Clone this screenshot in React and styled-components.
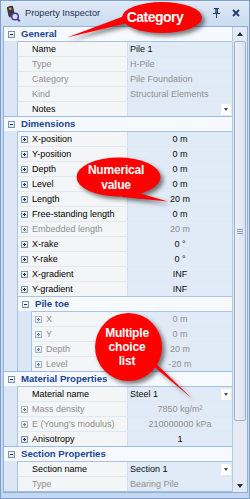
import React from 'react';
import styled, { createGlobalStyle } from 'styled-components';

const GlobalStyle = createGlobalStyle`
  html, body {
    margin: 0;
    padding: 0;
    background: #ffffff;
  }
  body {
    font-family: "Liberation Sans", Arial, sans-serif;
  }
`;

const sections = [
  {
    title: 'General',
    rows: [
      { name: 'Name', value: 'Pile 1', text: true },
      { name: 'Type', value: 'H-Pile', text: true, off: true },
      { name: 'Category', value: 'Pile Foundation', text: true, off: true },
      { name: 'Kind', value: 'Structural Elements', text: true, off: true },
      { name: 'Notes', value: '', drop: true },
    ],
  },
  {
    title: 'Dimensions',
    rows: [
      { name: 'X-position', value: '0 m', plus: true },
      { name: 'Y-position', value: '0 m', plus: true },
      { name: 'Depth', value: '0 m', plus: true },
      { name: 'Level', value: '0 m', plus: true },
      { name: 'Length', value: '20 m', plus: true },
      { name: 'Free-standing length', value: '0 m', plus: true },
      { name: 'Embedded length', value: '20 m', plus: true, off: true },
      { name: 'X-rake', value: '0 °', plus: true },
      { name: 'Y-rake', value: '0 °', plus: true },
      { name: 'X-gradient', value: 'INF', plus: true },
      { name: 'Y-gradient', value: 'INF', plus: true },
    ],
    sub: {
      title: 'Pile toe',
      rows: [
        { name: 'X', value: '0 m', plus: true, off: true },
        { name: 'Y', value: '0 m', plus: true, off: true },
        { name: 'Depth', value: '20 m', plus: true, off: true },
        { name: 'Level', value: '-20 m', plus: true, off: true },
      ],
    },
  },
  {
    title: 'Material Properties',
    rows: [
      { name: 'Material name', value: 'Steel 1', drop: true },
      { name: 'Mass density', value: '7850 kg/m²', plus: true, off: true },
      { name: "E (Young's modulus)", value: '210000000 kPa', plus: true, off: true },
      { name: 'Anisotropy', value: '1', plus: true },
    ],
  },
  {
    title: 'Section Properties',
    rows: [
      { name: 'Section name', value: 'Section 1', drop: true },
      { name: 'Type', value: 'Bearing Pile', text: true, off: true },
    ],
  },
];

const callouts = [
  {
    lines: ['Category'],
    ellipse: { cx: 162, cy: 17.5, rx: 40, ry: 15.5 },
    tail: '135,12 136,21 67,37.5',
    x: 122, y: 9, w: 66, size: 14, lh: 16,
  },
  {
    lines: ['Numerical', 'value'],
    ellipse: { cx: 118.5, cy: 177, rx: 42, ry: 19.5 },
    tail: '125,189 122,197 168,201.5',
    x: 82, y: 163, w: 68, size: 12, lh: 15,
  },
  {
    lines: ['Multiple', 'choice', 'list'],
    ellipse: { cx: 128.5, cy: 347, rx: 33.5, ry: 34 },
    tail: '148,356 146,360 192,398.5',
    x: 97, y: 326, w: 60, size: 12, lh: 14,
  },
];

const Page = styled.div`
  position: relative;
  width: 250px;
  height: 499px;
  overflow: hidden;
`;

const Window = styled.div`
  box-sizing: border-box;
  width: 250px;
  height: 499px;
  border: 1px solid #7f9fc9;
  background: linear-gradient(#dfe9f6, #c9dbf0 26px, #c4d7ee);
  display: flex;
  flex-direction: column;
  padding: 0 1px 5px 2px;
  font-family: "Liberation Sans", Arial, sans-serif;
`;

const TitleBar = styled.div`
  height: 25px;
  display: flex;
  align-items: center;
  padding: 0 8px 0 2px;
  gap: 4px;
  flex-shrink: 0;
`;

const TitleText = styled.span`
  font-size: 9.2px;
  color: #1d2f4f;
  margin-top: -1px;
`;

const TitleButtons = styled.div`
  margin-left: auto;
  display: flex;
  align-items: center;
  gap: 11px;
  margin-top: -1px;
`;

const Panel = styled.div`
  flex: 1;
  display: flex;
  border: 1px solid #8fb0da;
  background: #f6f8fb;
  min-height: 0;
`;

const Grid = styled.div`
  width: 228px;
  display: flex;
  flex-direction: column;
`;

const Section = styled.div`
  border-bottom: 1px solid #9dbce5;
`;

const CategoryHeader = styled.div`
  height: 14px;
  display: flex;
  align-items: center;
  background: #f6f9fd;
  border-top: ${(p) => (p.$sub ? '1px solid #a6c2e7' : 'none')};
`;

const ExpandCell = styled.div`
  width: 14px;
  height: 14px;
  display: flex;
  align-items: center;
  justify-content: center;
  flex-shrink: 0;
`;

const ExpandBox = styled.span`
  position: relative;
  box-sizing: border-box;
  width: 7px;
  height: 7px;
  flex-shrink: 0;
  border: 1px solid ${(p) => (p.$off ? '#a3b3c8' : '#7a92b4')};
  background: linear-gradient(#ffffff, #dbe3ee);
  &::before {
    content: '';
    position: absolute;
    left: 1px;
    top: 2px;
    width: 3px;
    height: 1px;
    background: ${(p) => (p.$off ? '#6f7d90' : '#1d2c45')};
  }
  &::after {
    content: '';
    display: ${(p) => (p.$plus ? 'block' : 'none')};
    position: absolute;
    left: 2px;
    top: 1px;
    width: 1px;
    height: 3px;
    background: ${(p) => (p.$off ? '#6f7d90' : '#1d2c45')};
  }
`;

const CategoryTitle = styled.span`
  padding-left: 3px;
  font-size: 9.6px;
  font-weight: bold;
  color: #1b4596;
  line-height: 14px;
`;

const Body = styled.div`
  display: flex;
`;

const Margin = styled.div`
  width: 13px;
  flex-shrink: 0;
  background: #dce7f5;
  border-right: 1px solid #a9c3e5;
`;

const Rows = styled.div`
  flex: 1;
  display: flex;
  flex-direction: column;
`;

const Row = styled.div`
  display: grid;
  grid-template-columns: 1fr 104px;
  height: 14px;
  border-top: 1px solid ${(p) => (p.$first ? '#a6c2e7' : '#e1e8f1')};
`;

const NameCell = styled.div`
  display: flex;
  align-items: center;
  gap: 4px;
  padding-left: 3px;
  background: #f4f5f7;
  border-right: 1px solid #d2ddec;
  font-size: 9px;
  line-height: 14px;
  white-space: nowrap;
  overflow: hidden;
  color: ${(p) => (p.$off ? '#8f8f8f' : '#000000')};
`;

const BoxSpacer = styled.span`
  width: 7px;
  flex-shrink: 0;
`;

const ValueCell = styled.div`
  display: flex;
  align-items: center;
  justify-content: ${(p) => (p.$text ? 'flex-start' : 'center')};
  padding-left: ${(p) => (p.$text ? '2px' : '0')};
  background: #e1ebf8;
  font-size: 9px;
  line-height: 14px;
  white-space: nowrap;
  color: ${(p) => (p.$off ? '#8f8f8f' : '#0a0a0a')};
`;

const DropButton = styled.span`
  margin-left: auto;
  margin-right: 1px;
  width: 10px;
  height: 11px;
  background: #ffffff;
  display: flex;
  align-items: center;
  justify-content: center;
`;

const Caret = styled.span`
  width: 0;
  height: 0;
  border-left: 2.5px solid transparent;
  border-right: 2.5px solid transparent;
  border-top: 3px solid #3d4a60;
`;

const Scrollbar = styled.div`
  width: 14px;
  border-left: 1px solid #b7cbe5;
  background: #e3eaf3;
  display: flex;
  flex-direction: column;
`;

const ArrowButton = styled.div`
  height: 13px;
  flex-shrink: 0;
  display: flex;
  align-items: center;
  justify-content: center;
`;

const ArrowUp = styled.span`
  width: 0;
  height: 0;
  border-left: 3.5px solid transparent;
  border-right: 3.5px solid transparent;
  border-bottom: 4px solid #1d2c45;
`;

const ArrowDown = styled.span`
  width: 0;
  height: 0;
  border-left: 3.5px solid transparent;
  border-right: 3.5px solid transparent;
  border-top: 4px solid #1d2c45;
`;

const Thumb = styled.div`
  box-sizing: border-box;
  height: 380px;
  margin: 1px 1px 0 1px;
  border: 1px solid #9ab0cc;
  border-radius: 2px;
  background: linear-gradient(to right, #eef2f8, #d9e2ee);
  display: flex;
  align-items: center;
  justify-content: center;
`;

const Grip = styled.span`
  width: 6px;
  height: 5px;
  background: repeating-linear-gradient(#8a9bb3 0 1px, transparent 1px 2px);
`;

const Track = styled.div`
  flex: 1;
`;

const Overlay = styled.svg`
  position: absolute;
  left: 0;
  top: 0;
  pointer-events: none;
  filter: drop-shadow(3px 3px 2px rgba(0, 0, 0, 0.5));
`;

const CalloutLabel = styled.div`
  position: absolute;
  left: ${(p) => p.$x}px;
  top: ${(p) => p.$y}px;
  width: ${(p) => p.$w}px;
  text-align: center;
  color: #ffffff;
  font-weight: bold;
  font-size: ${(p) => p.$size}px;
  line-height: ${(p) => p.$lh}px;
  letter-spacing: ${(p) => (p.$size > 12 ? '-0.5px' : '-0.2px')};
`;

const AppIcon = () => (
  <svg width="16" height="17" viewBox="0 0 16 17">
    <rect x="2.5" y="1" width="6.5" height="11" rx="1.8" fill="#3b3b3f" transform="rotate(-12 6 6)" />
    <circle cx="5.2" cy="3.8" r="1.3" fill="#e9a440" />
    <circle cx="10" cy="11.5" r="3.3" fill="#d6defa" stroke="#4b38a6" strokeWidth="1.5" />
    <line x1="12.4" y1="14" x2="14.8" y2="16.4" stroke="#4b38a6" strokeWidth="1.8" />
  </svg>
);

const PinIcon = () => (
  <svg width="9" height="10" viewBox="0 0 9 10">
    <path d="M2 0h5v1H6v4h2v1H1V5h2V1H2z" fill="#1e3c6e" />
    <rect x="3.5" y="1" width="1" height="4" fill="#7f9bc6" />
    <rect x="4" y="6" width="1" height="4" fill="#1e3c6e" />
  </svg>
);

const CloseIcon = () => (
  <svg width="8" height="8" viewBox="0 0 8 8">
    <path d="M1 1l6 6M7 1L1 7" stroke="#1e3c6e" strokeWidth="1.8" />
  </svg>
);

const PropRow = ({ row, first }) => (
  <Row $first={first}>
    <NameCell $off={row.off}>
      {row.plus ? <ExpandBox $plus $off={row.off} /> : <BoxSpacer />}
      <span>{row.name}</span>
    </NameCell>
    <ValueCell $off={row.off} $text={row.text || row.drop}>
      {row.value}
      {row.drop && (
        <DropButton>
          <Caret />
        </DropButton>
      )}
    </ValueCell>
  </Row>
);

const Category = ({ section }) => (
  <Section>
    <CategoryHeader>
      <ExpandCell>
        <ExpandBox />
      </ExpandCell>
      <CategoryTitle>{section.title}</CategoryTitle>
    </CategoryHeader>
    <Body>
      <Margin />
      <Rows>
        {section.rows.map((row, i) => (
          <PropRow key={row.name + i} row={row} first={i === 0} />
        ))}
        {section.sub && (
          <>
            <CategoryHeader $sub>
              <ExpandCell>
                <ExpandBox />
              </ExpandCell>
              <CategoryTitle>{section.sub.title}</CategoryTitle>
            </CategoryHeader>
            <Body>
              <Margin />
              <Rows>
                {section.sub.rows.map((row, i) => (
                  <PropRow key={row.name + i} row={row} first={i === 0} />
                ))}
              </Rows>
            </Body>
          </>
        )}
      </Rows>
    </Body>
  </Section>
);

export default function App() {
  return (
    <Page>
      <GlobalStyle />
      <Window>
        <TitleBar>
          <AppIcon />
          <TitleText>Property Inspector</TitleText>
          <TitleButtons>
            <PinIcon />
            <CloseIcon />
          </TitleButtons>
        </TitleBar>
        <Panel>
          <Grid>
            {sections.map((s) => (
              <Category key={s.title} section={s} />
            ))}
          </Grid>
          <Scrollbar>
            <ArrowButton>
              <ArrowUp />
            </ArrowButton>
            <Thumb>
              <Grip />
            </Thumb>
            <Track />
            <ArrowButton>
              <ArrowDown />
            </ArrowButton>
          </Scrollbar>
        </Panel>
      </Window>

      <Overlay width="250" height="499" viewBox="0 0 250 499">
        {callouts.map((c) => (
          <g key={c.lines[0]} fill="#ff0000">
            <polygon points={c.tail} />
            <ellipse cx={c.ellipse.cx} cy={c.ellipse.cy} rx={c.ellipse.rx} ry={c.ellipse.ry} />
          </g>
        ))}
      </Overlay>
      {callouts.map((c) => (
        <CalloutLabel key={c.lines[0]} $x={c.x} $y={c.y} $w={c.w} $size={c.size} $lh={c.lh}>
          {c.lines.map((l) => (
            <div key={l}>{l}</div>
          ))}
        </CalloutLabel>
      ))}
    </Page>
  );
}
